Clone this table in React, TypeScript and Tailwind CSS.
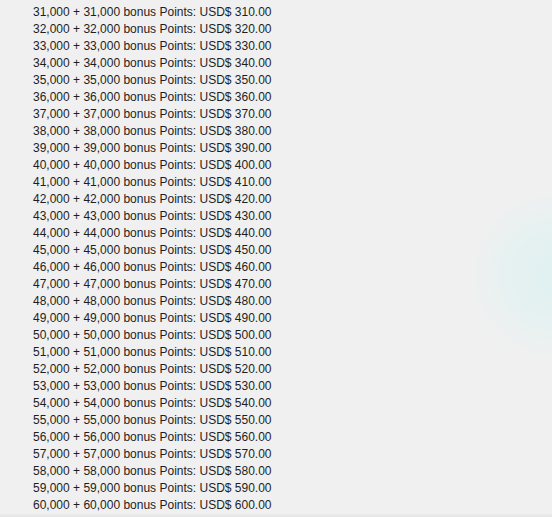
import React from "react";

const rows = Array.from({ length: 30 }, (_, i) => 31 + i);

const fmt = (n: number) => `${n},000`;

export default function App() {
  return (
    <div className="relative h-[517px] w-[552px] overflow-hidden bg-[#f0f0f0]">
      {/* faint cyan glow on the right */}
      <div className="pointer-events-none absolute left-[470px] top-[190px] h-[170px] w-[170px] rounded-full bg-[radial-gradient(circle,#dff0f0_0%,#e6f1f1_40%,rgba(240,240,240,0)_70%)]" />

      <ul className="relative pl-[33px] pt-[4px] font-['Liberation_Sans',Arial,sans-serif] text-[12px] leading-[17px] text-[#1e1e1e]">
        {rows.map((n) => (
          <li key={n}>
            {fmt(n)} + {fmt(n)} bonus Points: USD$ {n * 10}.00
          </li>
        ))}
      </ul>

      <div className="absolute bottom-0 left-0 right-0 h-[4px] bg-gradient-to-b from-[#f0f0f0] to-[#e4e4e4]" />
    </div>
  );
}
